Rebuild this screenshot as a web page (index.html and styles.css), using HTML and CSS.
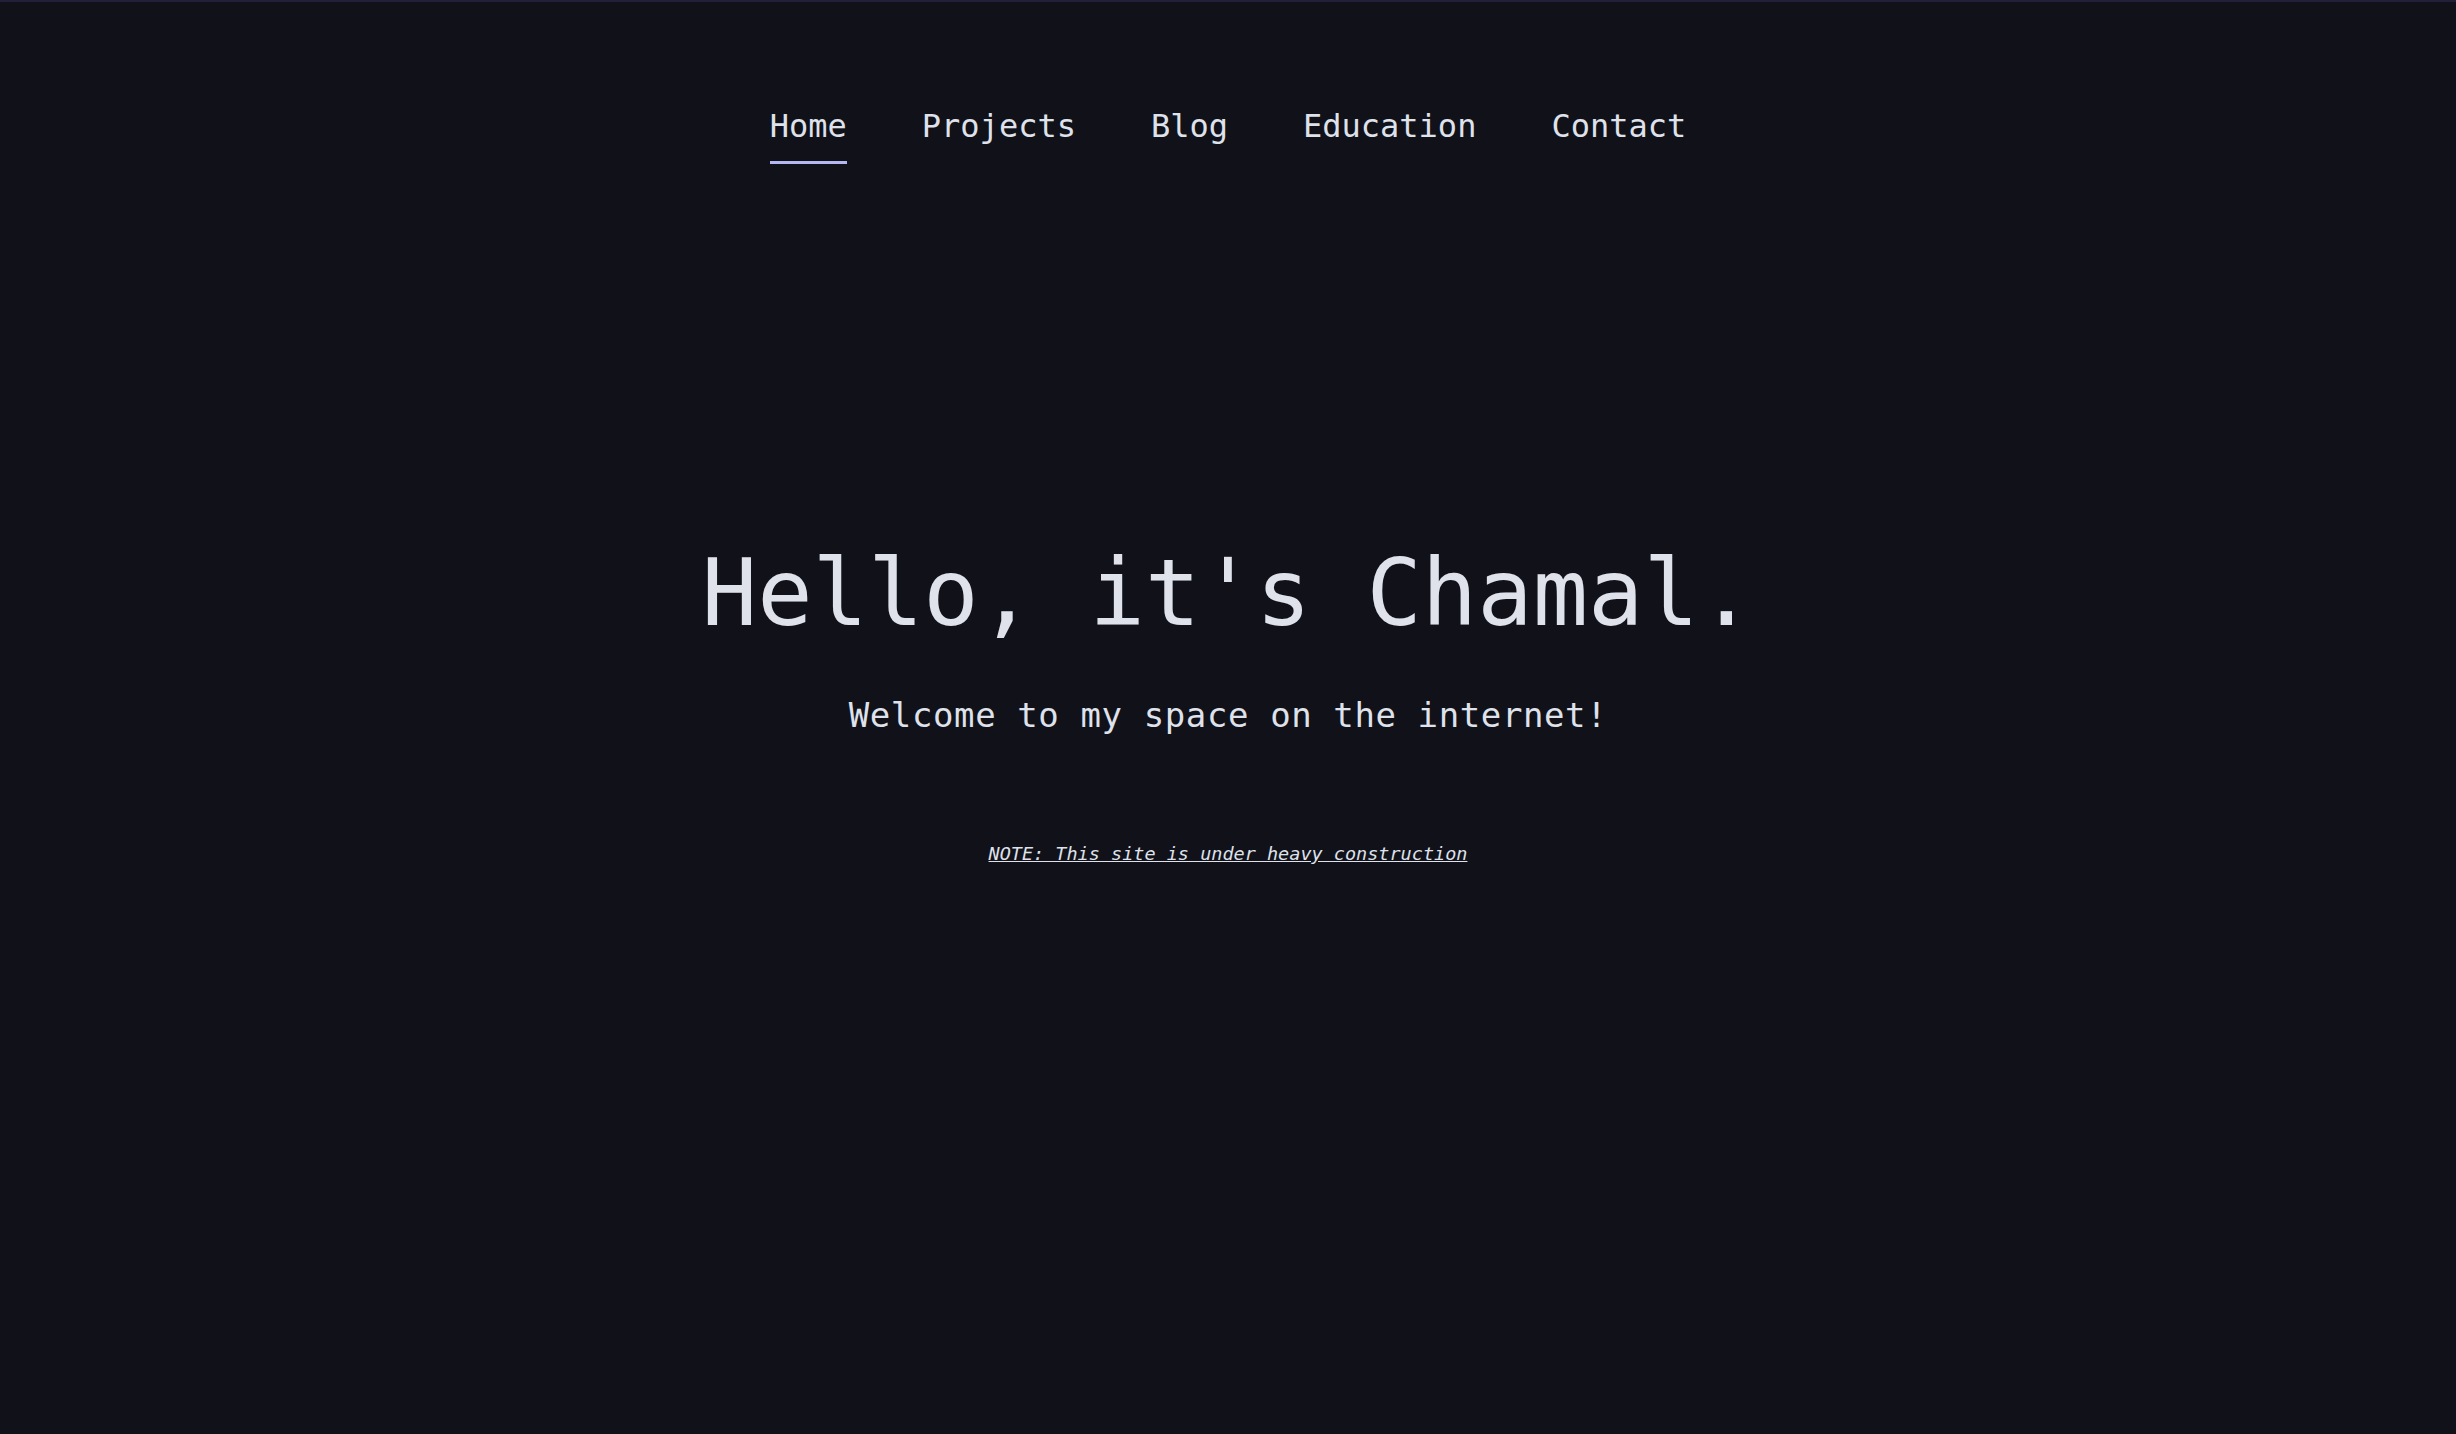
FILE: index.html
```html
<!DOCTYPE html>
<html lang="en">
<head>
<meta charset="utf-8">
<title>Chamal</title>
<link rel="stylesheet" href="styles.css">
</head>
<body>
<div class="page">
  <nav class="nav">
    <a class="nav-link active" href="#">Home</a>
    <a class="nav-link" href="#">Projects</a>
    <a class="nav-link" href="#">Blog</a>
    <a class="nav-link" href="#">Education</a>
    <a class="nav-link" href="#">Contact</a>
  </nav>
  <main class="hero">
    <h1 class="title">Hello, it's Chamal.</h1>
    <p class="subtitle">Welcome to my space on the internet!</p>
    <p class="note"><a href="#">NOTE: This site is under heavy construction</a></p>
  </main>
</div>
</body>
</html>
```

FILE: styles.css
```css
* { box-sizing: border-box; }
html, body {
  margin: 0;
  padding: 0;
  background: #111119;
}
body {
  font-family: "DejaVu Sans Mono", "Liberation Mono", monospace;
  color: #dfe2eb;
  border-top: 2px solid #221f38;
  min-height: 100vh;
}
.page {
  display: flex;
  flex-direction: column;
  align-items: center;
}
.nav {
  display: flex;
  gap: 75px;
  padding-top: 106px;
}
.nav-link {
  color: #dfe2eb;
  text-decoration: none;
  font-size: 32px;
  line-height: 36px;
  padding-bottom: 17px;
  border-bottom: 3px solid transparent;
}
.nav-link.active {
  border-bottom-color: #b3b8f3;
}
.hero {
  display: flex;
  flex-direction: column;
  align-items: center;
  padding-top: 375px;
}
.title {
  margin: 0;
  font-size: 92px;
  font-weight: normal;
  line-height: 110px;
}
.subtitle {
  margin: 44px 0 0;
  font-size: 34px;
  line-height: 44px;
  letter-spacing: 0.6px;
}
.note {
  margin: 106px 0 0;
  font-size: 18.5px;
  font-style: italic;
}
.note a {
  color: #dfe2eb;
  text-decoration: underline;
}
```
